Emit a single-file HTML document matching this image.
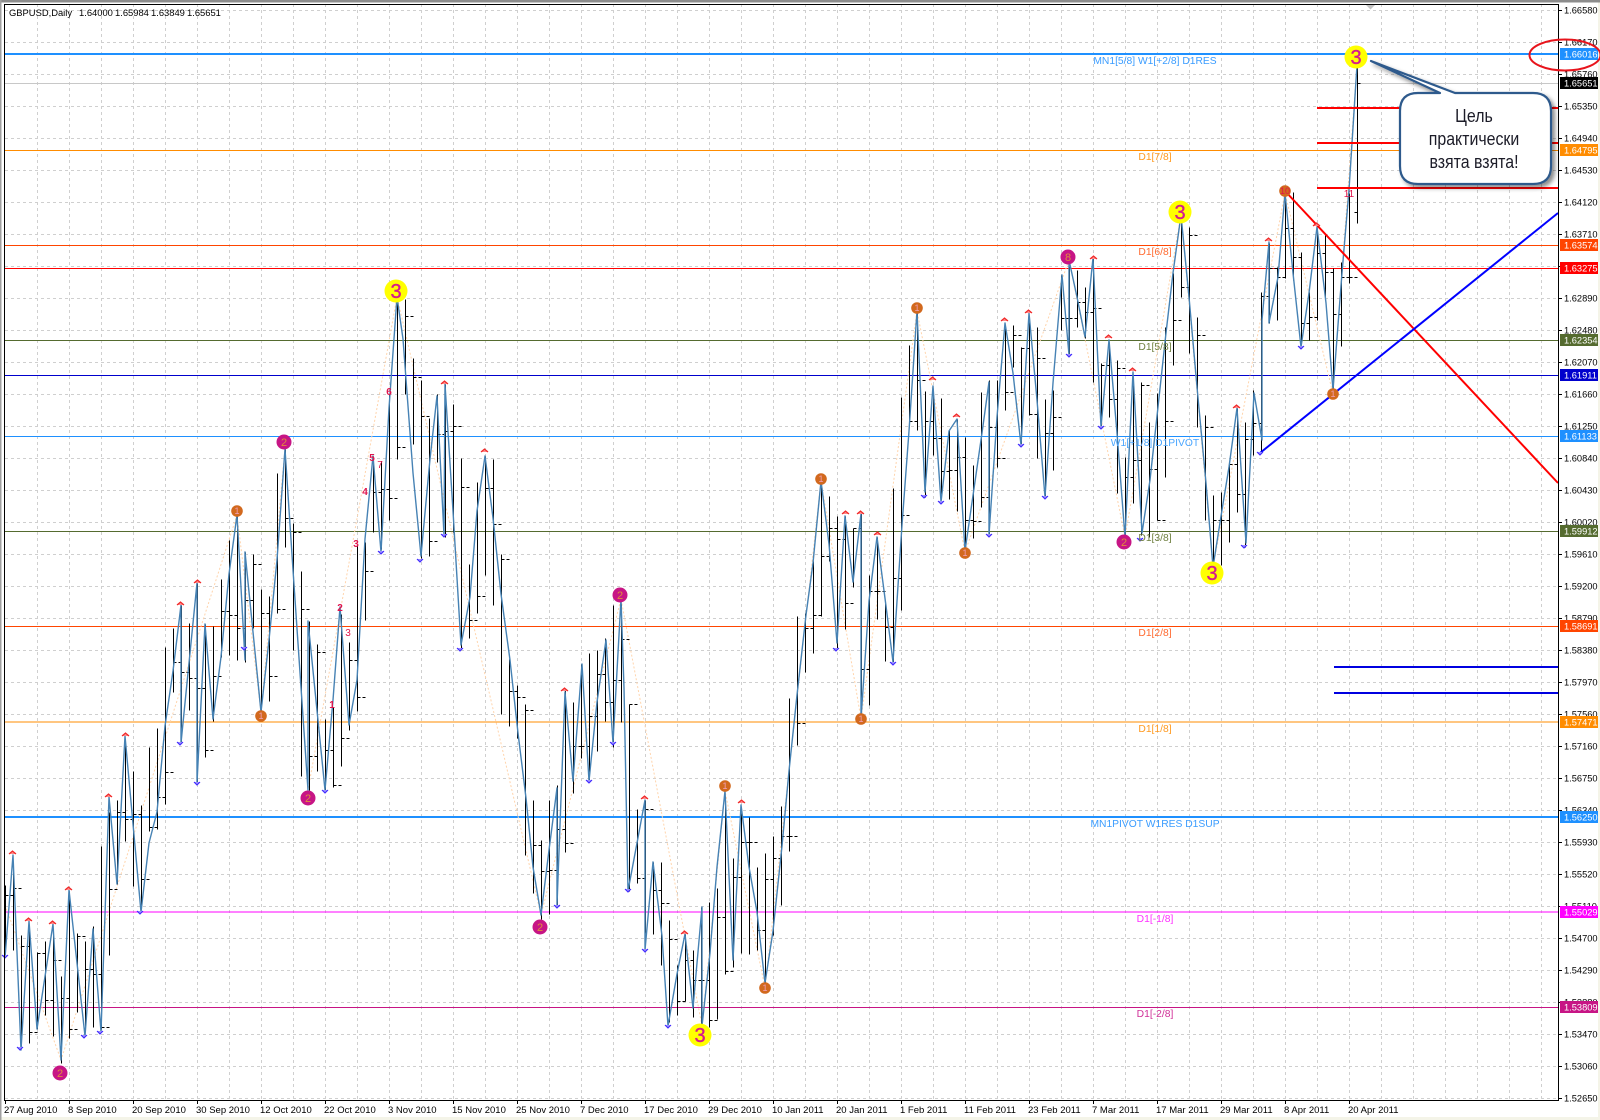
<!DOCTYPE html>
<html lang="en"><head><meta charset="utf-8"><title>GBPUSD,Daily</title>
<style>html,body{margin:0;padding:0;background:#fff;width:1600px;height:1120px;overflow:hidden}svg{display:block}text{font-family:"Liberation Sans","Noto Sans CJK SC",sans-serif}</style>
</head><body>
<svg xmlns="http://www.w3.org/2000/svg" width="1600" height="1120" viewBox="0 0 1600 1120">
<rect width="1600" height="1120" fill="#fff"/>
<rect x="0" y="1117" width="1600" height="3" fill="#f4f4e8"/><rect x="1598" y="0" width="2" height="1120" fill="#f4f4e8"/>
<rect width="1600" height="2.5" fill="#8c8c8c"/><rect width="1.5" height="1120" fill="#a0a0a0"/>

<!-- grid -->
<path shape-rendering="crispEdges" fill="none" stroke="#cfcfcf" stroke-dasharray="3 3" d="M5 10.5H1558M5 42.5H1558M5 74.5H1558M5 106.5H1558M5 138.5H1558M5 170.5H1558M5 202.5H1558M5 234.5H1558M5 266.5H1558M5 298.5H1558M5 330.5H1558M5 362.5H1558M5 394.5H1558M5 426.5H1558M5 458.5H1558M5 490.5H1558M5 522.5H1558M5 554.5H1558M5 586.5H1558M5 618.5H1558M5 650.5H1558M5 682.5H1558M5 714.5H1558M5 746.5H1558M5 778.5H1558M5 810.5H1558M5 842.5H1558M5 874.5H1558M5 906.5H1558M5 938.5H1558M5 970.5H1558M5 1002.5H1558M5 1034.5H1558M5 1066.5H1558M5 1098.5H1558
M37.5 4V1100M69.5 4V1100M101.5 4V1100M133.5 4V1100M165.5 4V1100M197.5 4V1100M229.5 4V1100M261.5 4V1100M293.5 4V1100M325.5 4V1100M357.5 4V1100M389.5 4V1100M421.5 4V1100M453.5 4V1100M485.5 4V1100M517.5 4V1100M549.5 4V1100M581.5 4V1100M613.5 4V1100M645.5 4V1100M677.5 4V1100M709.5 4V1100M741.5 4V1100M773.5 4V1100M805.5 4V1100M837.5 4V1100M869.5 4V1100M901.5 4V1100M933.5 4V1100M965.5 4V1100M997.5 4V1100M1029.5 4V1100M1061.5 4V1100M1093.5 4V1100M1125.5 4V1100M1157.5 4V1100M1189.5 4V1100M1221.5 4V1100M1253.5 4V1100M1285.5 4V1100M1317.5 4V1100M1349.5 4V1100M1381.5 4V1100M1413.5 4V1100M1445.5 4V1100M1477.5 4V1100M1509.5 4V1100M1541.5 4V1100"/>

<!-- horizontal levels -->
<g shape-rendering="crispEdges" fill="none">
<path stroke="#c8c8c8" d="M5 83.5H1558"/>
<path stroke="#1e90ff" stroke-width="2" d="M5 54H1558M5 817H1558"/>
<path stroke="#ff8c00" d="M5 150.5H1558"/>
<path stroke="#ff8c00" stroke-width="1.4" d="M5 722H1558"/>
<path stroke="#ff4500" d="M5 245.5H1558"/>
<path stroke="#ff4500" stroke-width="1.4" d="M5 626.5H1558"/>
<path stroke="#ff0000" d="M5 268.5H1558"/>
<path stroke="#556b2f" d="M5 340.5H1558M5 531.5H1558"/>
<path stroke="#0000cd" d="M5 375.5H1558"/>
<path stroke="#1e90ff" d="M5 436.5H1558"/>
<path stroke="#ff00ff" stroke-width="1.4" d="M5 912H1558"/>
<path stroke="#c71585" d="M5 1007.5H1558"/>
</g>

<!-- large wave dotted -->
<path fill="none" stroke="#ffd4ac" stroke-dasharray="2 2" d="M5 905L61 1060L237 515L261 712L285 449L308 790L397 297L541 915L621 599L702 1026L725 791L765 988L821 481L861 719L917 311L965 552L1069 260L1125 537L1181 215L1213 567L1285 193L1333 394L1357 65"/>

<!-- OHLC bars -->
<path transform="translate(.5 .5)" shape-rendering="crispEdges" fill="none" stroke="#000" d="M5 885V950M5 895h3m2 0h3M13 869V950M13 888h3m2 0h3M21 935V1046M21 946h3m2 0h3M29 929V1043M29 1032h3m2 0h3M37 952V1029M37 953h3m2 0h3M45 941V1015M45 1000h3m2 0h3M53 929V1036M53 960h3m2 0h3M61 976V1063M61 998h3m2 0h3M69 891V1038M69 1029h3m2 0h3M77 933V1012M77 936h3m2 0h3M85 941V1029M85 969h3m2 0h3M93 926V1027M93 974h3m2 0h3M101 846V1029M101 1027h3m2 0h3M109 812V955M109 889h3m2 0h3M117 800V884M117 812h3m2 0h3M125 743V841M125 819h3m2 0h3M133 771V886M133 814h3m2 0h3M141 805V908M141 879h3m2 0h3M149 747V831M149 827h3m2 0h3M157 728V829M157 797h3m2 0h3M165 647V804M165 772h3m2 0h3M173 628V692M173 662h3m2 0h3M181 605V743M181 672h3m2 0h3M189 623V710M189 678h3m2 0h3M197 583V783M197 688h3m2 0h3M205 624V757M205 750h3m2 0h3M213 626V721M213 676h3m2 0h3M221 579V657M221 611h3m2 0h3M229 540V655M229 615h3m2 0h3M237 516V660M237 628h3m2 0h3M245 552V662M245 600h3m2 0h3M253 554V628M253 564h3m2 0h3M261 589V711M261 613h3m2 0h3M269 596V701M269 676h3m2 0h3M277 473V613M277 609h3m2 0h3M285 449V547M285 518h3m2 0h3M293 523V650M293 532h3m2 0h3M301 571V776M301 609h3m2 0h3M309 621V790M309 756h3m2 0h3M317 644V771M317 652h3m2 0h3M325 719V790M325 750h3m2 0h3M333 707V787M333 785h3m2 0h3M341 614V766M341 738h3m2 0h3M349 642V730M349 660h3m2 0h3M357 545V711M357 697h3m2 0h3M365 542V620M365 571h3m2 0h3M373 456V532M373 492h3m2 0h3M381 461V549M381 489h3m2 0h3M389 394V520M389 498h3m2 0h3M397 301V459M397 447h3m2 0h3M405 299V394M405 316h3m2 0h3M413 358V444M413 377h3m2 0h3M421 380V558M421 416h3m2 0h3M429 418V556M429 541h3m2 0h3M437 394V462M437 434h3m2 0h3M445 384V537M445 431h3m2 0h3M453 404V532M453 426h3m2 0h3M461 458V649M461 487h3m2 0h3M469 564V638M469 620h3m2 0h3M477 482V613M477 596h3m2 0h3M485 456V575M485 488h3m2 0h3M493 459V605M493 524h3m2 0h3M501 554V714M501 559h3m2 0h3M509 659V726M509 691h3m2 0h3M517 685V738M517 697h3m2 0h3M525 704V855M525 710h3m2 0h3M533 800V893M533 845h3m2 0h3M541 840V919M541 871h3m2 0h3M549 800V914M549 870h3m2 0h3M557 785V905M557 829h3m2 0h3M565 688V852M565 843h3m2 0h3M573 702V793M573 746h3m2 0h3M581 664V758M581 746h3m2 0h3M589 653V781M589 716h3m2 0h3M597 650V751M597 674h3m2 0h3M605 638V721M605 702h3m2 0h3M613 605V747M613 680h3m2 0h3M621 604V722M621 639h3m2 0h3M629 704V891M629 704h3m2 0h3M637 809V883M637 878h3m2 0h3M645 800V933M645 809h3m2 0h3M653 862V934M653 890h3m2 0h3M661 862V965M661 903h3m2 0h3M669 920V1022M669 939h3m2 0h3M677 965V1015M677 1001h3m2 0h3M685 934V1001M685 960h3m2 0h3M693 950V1017M693 980h3m2 0h3M701 907V1024M701 980h3m2 0h3M709 902V1027M709 1020h3m2 0h3M717 888V1019M717 917h3m2 0h3M725 797V974M725 971h3m2 0h3M733 858V967M733 877h3m2 0h3M741 813V953M741 842h3m2 0h3M749 817V954M749 842h3m2 0h3M757 867V950M757 930h3m2 0h3M765 853V986M765 879h3m2 0h3M773 836V935M773 858h3m2 0h3M781 806V905M781 836h3m2 0h3M789 698V851M789 836h3m2 0h3M797 616V745M797 723h3m2 0h3M805 613V672M805 628h3m2 0h3M813 561V653M813 615h3m2 0h3M821 481V616M821 556h3m2 0h3M829 496V561M829 528h3m2 0h3M837 516V648M837 539h3m2 0h3M845 516V629M845 603h3m2 0h3M853 528V587M853 528h3m2 0h3M861 511V719M861 669h3m2 0h3M869 575V705M869 591h3m2 0h3M877 537V619M877 591h3m2 0h3M885 603V661M885 627h3m2 0h3M893 488V663M893 578h3m2 0h3M901 397V610M901 515h3m2 0h3M909 345V422M909 421h3m2 0h3M917 313V430M917 380h3m2 0h3M925 391V497M925 421h3m2 0h3M933 389V455M933 438h3m2 0h3M941 398V499M941 471h3m2 0h3M949 429V499M949 470h3m2 0h3M957 419V511M957 457h3m2 0h3M965 437V552M965 520h3m2 0h3M973 465V538M973 521h3m2 0h3M981 392V507M981 497h3m2 0h3M989 380V535M989 427h3m2 0h3M997 380V467M997 458h3m2 0h3M1005 325V410M1005 392h3m2 0h3M1013 325V367M1013 335h3m2 0h3M1021 347V445M1021 348h3m2 0h3M1029 317V415M1029 414h3m2 0h3M1037 327V458M1037 358h3m2 0h3M1045 399V497M1045 433h3m2 0h3M1053 390V470M1053 417h3m2 0h3M1061 275V330M1061 318h3m2 0h3M1069 263V355M1069 318h3m2 0h3M1077 270V327M1077 302h3m2 0h3M1085 287V338M1085 312h3m2 0h3M1093 258V382M1093 308h3m2 0h3M1101 363V427M1101 365h3m2 0h3M1109 342V417M1109 399h3m2 0h3M1117 360V493M1117 368h3m2 0h3M1125 457V535M1125 477h3m2 0h3M1133 382V503M1133 460h3m2 0h3M1141 382V535M1141 385h3m2 0h3M1149 422V537M1149 469h3m2 0h3M1157 393V520M1157 520h3m2 0h3M1165 327V477M1165 421h3m2 0h3M1173 273V365M1173 320h3m2 0h3M1181 218V297M1181 287h3m2 0h3M1189 227V353M1189 235h3m2 0h3M1197 317V427M1197 335h3m2 0h3M1205 415V520M1205 427h3m2 0h3M1213 495V567M1213 520h3m2 0h3M1221 492V565M1221 520h3m2 0h3M1229 463V542M1229 464h3m2 0h3M1237 408V512M1237 494h3m2 0h3M1245 422V547M1245 439h3m2 0h3M1253 390V455M1253 423h3m2 0h3M1261 292V452M1261 296h3m2 0h3M1269 243V323M1269 268h3m2 0h3M1277 267V320M1277 277h3m2 0h3M1285 195V278M1285 228h3m2 0h3M1293 192V280M1293 257h3m2 0h3M1301 252V345M1301 323h3m2 0h3M1309 292V340M1309 317h3m2 0h3M1317 228V320M1317 253h3m2 0h3M1325 235V297M1325 272h3m2 0h3M1333 268V390M1333 314h3m2 0h3M1341 262V346M1341 277h3m2 0h3M1349 193V283M1349 277h3m2 0h3M1357 65V223M1357 212h-3M1357 83h3"/>

<!-- zigzag -->
<path fill="none" stroke="#4682b4" stroke-width="1.4" stroke-linejoin="round" d="M5 958L13 855L21 1050L29 921L37 1029L53 924L61 1060L69 890L85 1036L93 929L101 1032L109 797L117 884L125 736L141 912L149 843L157 812L165 726L173 671L181 605L181 743L197 583L197 783L205 624L213 719L221 657L229 574L237 515L245 660L245 552L261 712L269 640L277 560L285 449L293 570L308 790L308 621L325 790L333 700L340 607L349 725L357 680L365 539L373 456L381 552L389 408L397 297L403 339L413 473L421 556L430 459L437 396L444 535L445 384L453 511L461 645L470 597L477 511L485 456L493 518L501 594L510 660L518 733L526 798L533 867L541 915L549 850L557 788L557 905L565 692L573 781L582 664L589 781L597 702L606 640L613 743L621 599L624 688L628 891L637 843L645 800L645 950L653 862L662 936L668 1026L677 974L685 934L693 1008L702 907L702 1026L710 953L717 867L725 791L733 960L741 805L749 867L757 912L765 983L773 931L782 846L789 771L797 695L806 615L813 563L821 481L829 544L837 643L845 516L853 582L861 514L861 719L869 601L877 537L886 606L893 662L902 525L909 431L917 311L925 492L933 386L941 502L949 431L957 419L965 551L982 433L989 382L989 535L997 417L1005 323L1013 373L1021 445L1029 313L1037 400L1045 497L1053 383L1062 275L1069 355L1069 260L1077 297L1085 337L1093 258L1101 427L1109 340L1117 433L1125 537L1133 372L1142 533L1150 480L1158 407L1166 333L1173 273L1181 215L1189 297L1197 387L1206 483L1213 567L1222 510L1229 467L1237 408L1246 543L1254 393L1262 440L1262 320L1269 242L1269 323L1278 277L1285 193L1293 273L1301 347L1309 293L1317 227L1326 303L1333 390L1342 273L1349 190L1357 65"/>

<!-- trend and target lines -->
<path fill="none" stroke="#ff0000" stroke-width="2" d="M1285 191L1558 483"/>
<path fill="none" stroke="#0000ff" stroke-width="2" d="M1260 453L1558 213"/>
<path shape-rendering="crispEdges" fill="none" stroke="#ff0000" stroke-width="2" d="M1317 108H1558M1317 143H1558M1317 188H1558"/>
<path shape-rendering="crispEdges" fill="none" stroke="#0000e0" stroke-width="2" d="M1334 667H1558M1334 693H1558"/>

<!-- up arrows -->
<path fill="#ff8a8a" stroke="#f02828" stroke-width="1.2" d="M9 854l3.500-3 3.500 3M25 921l3.500-3 3.500 3M49 924l3.500-3 3.500 3M65 890l3.500-3 3.500 3M105 797l3.500-3 3.500 3M122 736l3.500-3 3.500 3M177 605l3.500-3 3.500 3M194 583l3.500-3 3.500 3M441 384l3.500-3 3.500 3M481 452l3.500-3 3.500 3M561 691l3.500-3 3.500 3M641 799l3.500-3 3.500 3M681 934l3.500-3 3.500 3M738 803l3.500-3 3.500 3M842 514l3.500-3 3.500 3M857 514l3.500-3 3.500 3M874 535l3.500-3 3.500 3M929 380l3.500-3 3.500 3M953 417l3.500-3 3.500 3M1001 321l3.500-3 3.500 3M1025 313l3.500-3 3.500 3M1090 259l3.500-3 3.500 3M1105 338l3.500-3 3.500 3M1129 371l3.500-3 3.500 3M1233 408l3.500-3 3.500 3M1265 241l3.500-3 3.500 3M1313 226l3.500-3 3.500 3"/>
<!-- down arrows -->
<path fill="#9c90ff" stroke="#3f28ff" stroke-width="1.1" d="M2 955l3 3 3-3M17 1047l3 3 3-3M81 1035l3 3 3-3M97 1031l3 3 3-3M137 911l3 3 3-3M177 742l3 3 3-3M194 782l3 3 3-3M241 647l3 3 3-3M322 790l3 3 3-3M378 551l3 3 3-3M417 559l3 3 3-3M441 534l3 3 3-3M457 648l3 3 3-3M554 905l3 3 3-3M586 780l3 3 3-3M610 742l3 3 3-3M625 889l3 3 3-3M642 949l3 3 3-3M665 1025l3 3 3-3M833 648l3 3 3-3M890 662l3 3 3-3M921 495l3 3 3-3M938 501l3 3 3-3M986 534l3 3 3-3M1018 444l3 3 3-3M1042 496l3 3 3-3M1066 354l3 3 3-3M1098 426l3 3 3-3M1137 538l3 3 3-3M1241 545l3 3 3-3M1257 452l3 3 3-3M1298 346l3 3 3-3"/>

<!-- wave labels -->
<g fill="#e0144c" font-size="10" font-weight="bold" text-anchor="middle">
<text x="389" y="395">6</text><text x="372" y="461">5</text><text x="380" y="468" font-weight="normal">7</text><text x="365" y="495">4</text><text x="356" y="547">3</text><text x="340" y="611">2</text><text x="348" y="636" font-weight="normal">3</text><text x="332" y="708">1</text><text x="1349" y="197" font-weight="normal">11</text>
</g>

<!-- yellow markers -->
<g fill="#ffff00"><circle cx="1356" cy="57" r="11.500"/><circle cx="396" cy="291" r="11.500"/><circle cx="1180" cy="212" r="11.500"/><circle cx="1212" cy="573" r="11.500"/><circle cx="700" cy="1035" r="11.500"/></g>
<g fill="#d01a96" stroke="#e0207a" stroke-width=".4" font-size="20" text-anchor="middle"><text x="1356" y="64">3</text><text x="396" y="298">3</text><text x="1180" y="219">3</text><text x="1212" y="580">3</text><text x="700" y="1042">3</text></g>
<!-- purple markers -->
<g fill="#c71585"><circle cx="60" cy="1073" r="7.500"/><circle cx="284" cy="442" r="7.500"/><circle cx="308" cy="798" r="7.500"/><circle cx="540" cy="927" r="7.500"/><circle cx="620" cy="595" r="7.500"/><circle cx="1068" cy="257" r="7.500"/><circle cx="1124" cy="542" r="7.500"/></g>
<g fill="#e08c3c" font-size="11" text-anchor="middle"><text x="60" y="1077">2</text><text x="284" y="446">2</text><text x="308" y="802">2</text><text x="540" y="931">2</text><text x="620" y="599">2</text><text x="1068" y="261">8</text><text x="1124" y="546">2</text></g>
<!-- orange markers -->
<g fill="#d2691e"><circle cx="237" cy="511" r="5.800"/><circle cx="261" cy="716" r="5.800"/><circle cx="725" cy="786" r="5.800"/><circle cx="821" cy="479" r="5.800"/><circle cx="861" cy="719" r="5.800"/><circle cx="917" cy="308" r="5.800"/><circle cx="965" cy="553" r="5.800"/><circle cx="765" cy="988" r="5.800"/><circle cx="1285" cy="191" r="5.800"/><circle cx="1333" cy="394" r="5.800"/></g>
<g fill="#f0a0b8" font-size="9" text-anchor="middle"><text x="237" y="514">1</text><text x="261" y="719">1</text><text x="725" y="789">1</text><text x="821" y="482">1</text><text x="861" y="722">1</text><text x="917" y="311">1</text><text x="965" y="556">1</text><text x="765" y="991">1</text><text x="1285" y="194" fill="#e0144c">10</text><text x="1333" y="397">1</text></g>

<!-- level labels -->
<g font-size="10.300" text-anchor="middle">
<text x="1155" y="64" fill="#3a9cff">MN1[5/8] W1[+2/8] D1RES</text>
<text x="1155" y="160" fill="#ff9a20">D1[7/8]</text>
<text x="1155" y="255" fill="#ff6a30">D1[6/8]</text>
<text x="1155" y="350" fill="#6f8040">D1[5/8]</text>
<text x="1155" y="446" fill="#4aa6ff">W1[+1/8] D1PIVOT</text>
<text x="1155" y="541" fill="#6f8040">D1[3/8]</text>
<text x="1155" y="636" fill="#ff6a30">D1[2/8]</text>
<text x="1155" y="732" fill="#ff9a20">D1[1/8]</text>
<text x="1155" y="827" fill="#3a9cff">MN1PIVOT W1RES D1SUP</text>
<text x="1155" y="922" fill="#ff30ff">D1[-1/8]</text>
<text x="1155" y="1017" fill="#d03098">D1[-2/8]</text>
</g>

<!-- frame -->
<path shape-rendering="crispEdges" fill="none" stroke="#000" d="M4.500 4.500H1558.500V1100.500H4.500Z"/>
<path shape-rendering="crispEdges" fill="none" stroke="#000" d="M1558 10.500h4M1558 42.500h4M1558 74.500h4M1558 106.500h4M1558 138.500h4M1558 170.500h4M1558 202.500h4M1558 234.500h4M1558 266.500h4M1558 298.500h4M1558 330.500h4M1558 362.500h4M1558 394.500h4M1558 426.500h4M1558 458.500h4M1558 490.500h4M1558 522.500h4M1558 554.500h4M1558 586.500h4M1558 618.500h4M1558 650.500h4M1558 682.500h4M1558 714.500h4M1558 746.500h4M1558 778.500h4M1558 810.500h4M1558 842.500h4M1558 874.500h4M1558 906.500h4M1558 938.500h4M1558 970.500h4M1558 1002.500h4M1558 1034.500h4M1558 1066.500h4M1558 1098.500h4
M5.500 1100v4M69.500 1100v4M133.500 1100v4M197.500 1100v4M261.500 1100v4M325.500 1100v4M389.500 1100v4M453.500 1100v4M517.500 1100v4M581.500 1100v4M645.500 1100v4M709.500 1100v4M773.500 1100v4M837.500 1100v4M901.500 1100v4M965.500 1100v4M1029.500 1100v4M1093.500 1100v4M1157.500 1100v4M1221.500 1100v4M1285.500 1100v4M1349.500 1100v4"/>
<polygon points="1366,5 1375,5 1370.500,9.500" fill="#c4c4c4"/>

<!-- title -->
<g font-size="9.400" fill="#000"><text x="9" y="16">GBPUSD,Daily</text><text x="79" y="16">1.64000</text><text x="115" y="16">1.65984</text><text x="151" y="16">1.63849</text><text x="187" y="16">1.65651</text></g>

<!-- price axis -->
<g font-size="9.300" fill="#000">
<text x="1564" y="13.500">1.66580</text><text x="1564" y="45.500">1.66170</text><text x="1564" y="77.500">1.65760</text><text x="1564" y="109.500">1.65350</text><text x="1564" y="141.500">1.64940</text><text x="1564" y="173.500">1.64530</text><text x="1564" y="205.500">1.64120</text><text x="1564" y="237.500">1.63710</text><text x="1564" y="269.500">1.63300</text><text x="1564" y="301.500">1.62890</text><text x="1564" y="333.500">1.62480</text><text x="1564" y="365.500">1.62070</text><text x="1564" y="397.500">1.61660</text><text x="1564" y="429.500">1.61250</text><text x="1564" y="461.500">1.60840</text><text x="1564" y="493.500">1.60430</text><text x="1564" y="525.500">1.60020</text><text x="1564" y="557.500">1.59610</text><text x="1564" y="589.500">1.59200</text><text x="1564" y="621.500">1.58790</text><text x="1564" y="653.500">1.58380</text><text x="1564" y="685.500">1.57970</text><text x="1564" y="717.500">1.57560</text><text x="1564" y="749.500">1.57160</text><text x="1564" y="781.500">1.56750</text><text x="1564" y="813.500">1.56340</text><text x="1564" y="845.500">1.55930</text><text x="1564" y="877.500">1.55520</text><text x="1564" y="909.500">1.55110</text><text x="1564" y="941.500">1.54700</text><text x="1564" y="973.500">1.54290</text><text x="1564" y="1005.500">1.53880</text><text x="1564" y="1037.500">1.53470</text><text x="1564" y="1069.500">1.53060</text><text x="1564" y="1101.500">1.52650</text>
</g>

<!-- highlighted prices -->
<g shape-rendering="crispEdges">
<rect x="1560" y="48" width="38" height="12" fill="#1e90ff"/><rect x="1560" y="77" width="38" height="12" fill="#000"/><rect x="1560" y="144" width="38" height="12" fill="#ff8c00"/><rect x="1560" y="239" width="38" height="12" fill="#ff4500"/><rect x="1560" y="262" width="38" height="12" fill="#ff0000"/><rect x="1560" y="334" width="38" height="12" fill="#556b2f"/><rect x="1560" y="369" width="38" height="12" fill="#0000cd"/><rect x="1560" y="430" width="38" height="12" fill="#1e90ff"/><rect x="1560" y="525" width="38" height="12" fill="#556b2f"/><rect x="1560" y="620" width="38" height="12" fill="#ff4500"/><rect x="1560" y="716" width="38" height="12" fill="#ff8c00"/><rect x="1560" y="811" width="38" height="12" fill="#1e90ff"/><rect x="1560" y="906" width="38" height="12" fill="#ff00ff"/><rect x="1560" y="1001" width="38" height="12" fill="#c71585"/>
</g>
<g font-size="9.300" fill="#fff">
<text x="1564" y="57.500">1.66016</text><text x="1564" y="86.500">1.65651</text><text x="1564" y="153.500">1.64795</text><text x="1564" y="248.500">1.63574</text><text x="1564" y="271.500">1.63275</text><text x="1564" y="343.500">1.62354</text><text x="1564" y="378.500">1.61911</text><text x="1564" y="439.500">1.61133</text><text x="1564" y="534.500">1.59912</text><text x="1564" y="629.500">1.58691</text><text x="1564" y="725.500">1.57471</text><text x="1564" y="820.500">1.56250</text><text x="1564" y="915.500">1.55029</text><text x="1564" y="1010.500">1.53809</text>
</g>

<!-- date axis -->
<g font-size="9.500" fill="#000">
<text x="4" y="1113">27 Aug 2010</text><text x="68" y="1113">8 Sep 2010</text><text x="132" y="1113">20 Sep 2010</text><text x="196" y="1113">30 Sep 2010</text><text x="260" y="1113">12 Oct 2010</text><text x="324" y="1113">22 Oct 2010</text><text x="388" y="1113">3 Nov 2010</text><text x="452" y="1113">15 Nov 2010</text><text x="516" y="1113">25 Nov 2010</text><text x="580" y="1113">7 Dec 2010</text><text x="644" y="1113">17 Dec 2010</text><text x="708" y="1113">29 Dec 2010</text><text x="772" y="1113">10 Jan 2011</text><text x="836" y="1113">20 Jan 2011</text><text x="900" y="1113">1 Feb 2011</text><text x="964" y="1113">11 Feb 2011</text><text x="1028" y="1113">23 Feb 2011</text><text x="1092" y="1113">7 Mar 2011</text><text x="1156" y="1113">17 Mar 2011</text><text x="1220" y="1113">29 Mar 2011</text><text x="1284" y="1113">8 Apr 2011</text><text x="1348" y="1113">20 Apr 2011</text>
</g>

<!-- callout -->
<defs><filter id="sh" x="-20%" y="-20%" width="140%" height="140%"><feDropShadow dx="3" dy="3" stdDeviation="2" flood-color="#000" flood-opacity=".45"/></filter></defs>
<path filter="url(#sh)" fill="#fff" stroke="#2f5a8c" stroke-width="2.200" stroke-linejoin="round" d="M1418 93H1440L1371 61L1455 93H1533Q1551 93 1551 111V166Q1551 184 1533 184H1418Q1400 184 1400 166V111Q1400 93 1418 93Z"/>
<g font-size="18.500" fill="#1c1c28" text-anchor="middle">
<text transform="translate(1474 122) scale(.86 1)">Цель</text>
<text transform="translate(1474 145) scale(.86 1)">практически</text>
<text transform="translate(1474 168) scale(.86 1)">взята взята!</text>
</g>

<!-- target ellipse -->
<ellipse cx="1565" cy="55" rx="35.500" ry="15.500" fill="none" stroke="#e8141c" stroke-width="2"/>
</svg>
</body></html>
